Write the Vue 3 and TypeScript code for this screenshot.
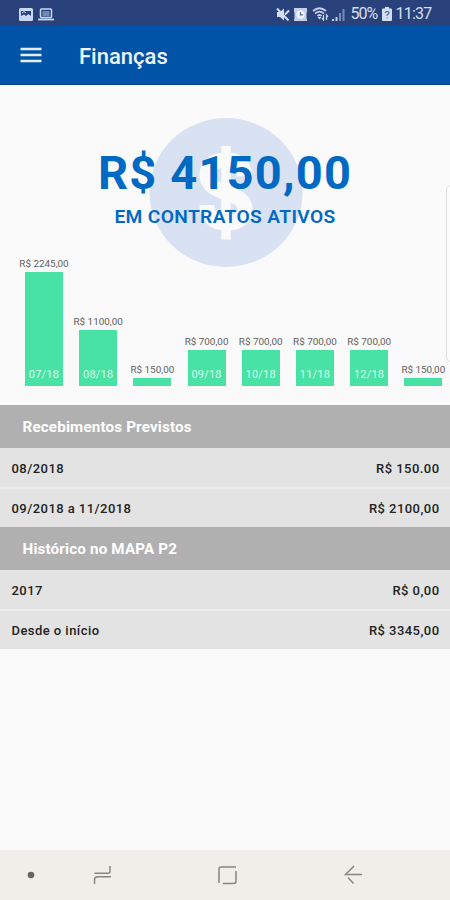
<script setup lang="ts">
interface Bar { value: string; month: string; height: number }
interface Row { label: string; amount: string }
interface Section { title: string; rows: Row[] }

const bars: Bar[] = [
  { value: 'R$ 2245,00', month: '07/18', height: 114 },
  { value: 'R$ 1100,00', month: '08/18', height: 56 },
  { value: 'R$ 150,00', month: '', height: 8 },
  { value: 'R$ 700,00', month: '09/18', height: 36 },
  { value: 'R$ 700,00', month: '10/18', height: 36 },
  { value: 'R$ 700,00', month: '11/18', height: 36 },
  { value: 'R$ 700,00', month: '12/18', height: 36 },
  { value: 'R$ 150,00', month: '', height: 8 },
]

const sections: Section[] = [
  {
    title: 'Recebimentos Previstos',
    rows: [
      { label: '08/2018', amount: 'R$ 150.00' },
      { label: '09/2018 a 11/2018', amount: 'R$ 2100,00' },
    ],
  },
  {
    title: 'Histórico no MAPA P2',
    rows: [
      { label: '2017', amount: 'R$ 0,00' },
      { label: 'Desde o início', amount: 'R$ 3345,00' },
    ],
  },
]
</script>

<template>
  <div class="screen">
    <header class="status">
      <div class="status-left">
        <svg width="14" height="13" viewBox="0 0 14 13">
          <rect width="14" height="13" rx="1.5" fill="#c9d8f1" />
          <path d="M2 3h10v5L9.5 6 7 8 5 6.500 2 8z" fill="#2a427c" />
          <path d="M3 5l2-1.500L7 5" stroke="#c9d8f1" fill="none" />
        </svg>
        <svg width="16" height="13" viewBox="0 0 16 13">
          <rect x="2.500" y="1" width="11" height="8.500" rx="1" fill="none" stroke="#c9d8f1" stroke-width="1.500" />
          <rect x="4.500" y="3" width="7" height="5" fill="#7487b2" />
          <path d="M0 11.500h16" stroke="#c9d8f1" stroke-width="1.800" />
        </svg>
      </div>
      <div class="status-right">
        <svg class="mute" width="14" height="13" viewBox="0 0 14 13">
          <path d="M1 4h3l4-3.500v12L4 9H1z" fill="#d3def1" />
          <path d="M1 .5l11.500 12M9 6.500l4-4" stroke="#d3def1" stroke-width="2" />
        </svg>
        <svg class="alarm" width="13" height="13" viewBox="0 0 13 13">
          <path d="M0 0h13v4l-.5 1v5l.5 2v1H0v-1l.5-2V5L0 4z" fill="#c3d0e9" />
          <circle cx="6.500" cy="6.500" r="4.200" fill="#edf3fc" />
          <path d="M6.500 4.200v2.600h2.200" fill="none" stroke="#4c629a" stroke-width="1.200" />
        </svg>
        <svg class="wifi" width="18" height="14" viewBox="0 0 18 14">
          <path d="M1 4q6.500-5.500 13 0M3 6.700q4.500-4 9 0M5.500 9q2-2 4 0" fill="none" stroke="#c3d0e9" stroke-width="1.700" />
          <path d="M7.500 12.500l-2-2.500h4z" fill="#d3def1" />
          <path d="M11.500 8v5l-1.500-2M14.500 13V8l1.500 2" fill="none" stroke="#c3d0e9" stroke-width="1.300" />
        </svg>
        <svg class="signal" width="13" height="13" viewBox="0 0 13 13">
          <path d="M1 11v2M4.500 9v4" stroke="#c3d0e9" stroke-width="2" />
          <path d="M8 5v8M11.500 1v12" stroke="#7889b3" stroke-width="2" />
        </svg>
        <span class="percent">50%</span>
        <svg class="battery" width="10" height="14" viewBox="0 0 10 14">
          <path d="M3 0h4v1.500h2q1 0 1 1V13q0 1-1 1H1q-1 0-1-1V2.500q0-1 1-1h2z" fill="#d3def1" />
          <path d="M3 6q2-3 4-.5Q7 7 5 8v1M5 10.500v1" fill="none" stroke="#6277a8" stroke-width="1.300" />
        </svg>
        <span class="time">11:37</span>
      </div>
    </header>

    <nav class="appbar">
      <svg width="22" height="18" viewBox="0 0 22 18">
        <path d="M.5 3h21M.5 9h21M.5 15h21" stroke="#e4edfb" stroke-width="2.600" />
      </svg>
      <h1>Finanças</h1>
    </nav>

    <main>
      <section class="hero">
        <svg class="coin" width="154" height="149" viewBox="0 0 154 149">
          <ellipse cx="77" cy="74.500" rx="76.500" ry="74.500" fill="#d8e2f3" />
          <path d="M77 28v93.500" stroke="#fafafa" stroke-width="9.500" />
          <path d="M96 58C95 45 86 42 77 42C64 42 58 49 58 57C58 67 66 71 77 75C90 79 96 83 96 91C96 101 88 105 77 105C65 105 58 99 58 87" fill="none" stroke="#fafafa" stroke-width="15" />
        </svg>
        <strong>R$ 4150,00</strong>
        <span>EM CONTRATOS ATIVOS</span>
      </section>

      <section class="chart">
        <div v-for="(bar, i) in bars" :key="i" class="column">
          <span class="value">{{ bar.value }}</span>
          <div class="bar" :style="{ height: bar.height + 'px' }"><span v-if="bar.month">{{ bar.month }}</span></div>
        </div>
      </section>

      <section v-for="section in sections" :key="section.title" class="group">
        <h2>{{ section.title }}</h2>
        <div v-for="row in section.rows" :key="row.label" class="row">
          <span>{{ row.label }}</span>
          <span class="amount">{{ row.amount }}</span>
        </div>
      </section>
    </main>

    <div class="edge-handle"></div>

    <footer>
      <svg class="dot" width="8" height="8" viewBox="0 0 8 8"><circle cx="4" cy="4" r="3.300" fill="#67665f" /></svg>
      <svg class="recent" width="20" height="20" viewBox="0 0 20 20">
        <path d="M1.500 8.300H15q2 0 2-2V1M18 11.700H4.500q-3 0-3 3V19" fill="none" stroke="#88867e" stroke-width="1.500" />
      </svg>
      <svg class="home" width="19" height="19" viewBox="0 0 19 19">
        <path d="M1 17V3q0-2 2-2h15M18 5v10q0 2.500-2.500 2.500H5" fill="none" stroke="#88867e" stroke-width="1.500" />
      </svg>
      <svg class="back" width="19" height="20" viewBox="0 0 19 20">
        <path d="M10 1L1.500 9.500H18M4 12.500l5.500 6" fill="none" stroke="#88867e" stroke-width="1.500" />
      </svg>
    </footer>
  </div>
</template>

<style>
body { margin: 0; background: #fafafa; }
</style>

<style scoped>
.screen { position: relative; display: flex; flex-direction: column; width: 450px; height: 900px; overflow: hidden; background: #fafafa; font-family: Roboto, sans-serif; }
.status { display: flex; justify-content: space-between; height: 26px; box-sizing: border-box; padding: 0 19.500px 0 19px; background: #2a427c; color: #d5dff2; }
.status-left, .status-right { display: flex; align-items: center; height: 28px; }
.status-left { gap: 5px; }
.mute { margin-right: 4px; }
.alarm { margin-right: 5px; }
.wifi { margin-right: 2px; }
.signal { margin-right: 6px; }
.battery { margin: 0 4px 0 5px; }
.percent, .time { font-size: 16px; line-height: 28px; white-space: nowrap; }
.percent { letter-spacing: -1px; width: 26px; }
.time { letter-spacing: -.8px; width: 35px; }
.appbar { display: flex; align-items: center; gap: 37px; height: 59px; box-sizing: border-box; padding: 0 20px; background: #0053a6; border-bottom: 1px solid #004391; }
h1 { margin: 3px 0 0; font-size: 22px; line-height: 28px; font-weight: 500; letter-spacing: 0; color: #eef5ff; }
main { flex: 1; }
.hero { position: relative; display: flex; flex-direction: column; align-items: center; height: 172px; padding-top: 61px; color: #0069c4; }
.coin { position: absolute; left: 149px; top: 33px; }
.hero strong { position: relative; font-size: 47px; line-height: 54px; font-weight: 700; letter-spacing: 1.200px; white-space: nowrap; }
.hero span { position: relative; margin-top: 5px; font-size: 19.200px; line-height: 24px; font-weight: 600; letter-spacing: .35px; }
.chart { display: flex; align-items: flex-end; gap: 16.200px; height: 68px; padding: 0 0 0 25px; }
.column { display: flex; flex-direction: column; align-items: center; flex: 0 0 38px; width: 38px; min-width: 0; }
.value { margin-bottom: 2px; font-size: 9.900px; line-height: 12px; color: #606060; white-space: nowrap; }
.bar { display: flex; align-items: flex-end; justify-content: center; width: 38px; box-sizing: border-box; background: #49e2a5; color: #d5ffee; font-size: 11px; line-height: 13px; letter-spacing: .2px; }
.bar span { padding-bottom: 5px; }
.chart + .group { margin-top: 19px; }
h2 { margin: 0; height: 42.500px; box-sizing: border-box; padding: 0 22.500px; background: #b0b0b0; color: #fff; font-size: 15.200px; line-height: 44px; font-weight: 700; letter-spacing: .16px; }
.row { display: flex; justify-content: space-between; height: 39px; box-sizing: border-box; padding: 0 10.500px 0 11.500px; background: #e3e3e3; color: #222; font-size: 13px; line-height: 41px; font-weight: 500; letter-spacing: .45px; }
.row + .row { height: 40.500px; border-top: 2px solid #eee; line-height: 40px; }
.edge-handle { position: absolute; left: 446px; top: 185px; width: 12px; height: 177px; box-sizing: border-box; border: 1px solid #dedede; border-radius: 5px; background: #fcfcfc; }
footer { display: flex; align-items: center; height: 50px; background: #efeee8; }
.dot { margin-left: 27px; }
.recent { margin-left: 58px; }
.home { margin-left: 105px; }
.back { margin-left: 107px; }
</style>
